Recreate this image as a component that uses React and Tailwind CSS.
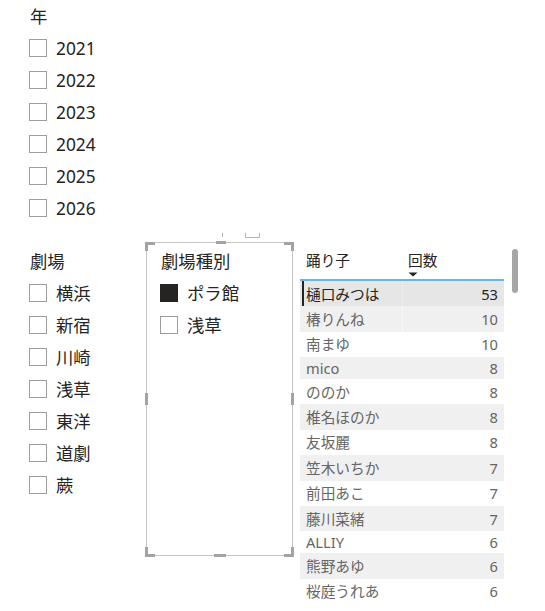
import React from "react";

const FONT = { fontFamily: '"Noto Sans", "Noto Sans CJK JP", sans-serif' };

function Box({ checked }) {
  return (
    <span
      className={
        checked
          ? "block w-[18px] h-[18px] shrink-0 bg-[#252423] border border-[#252423]"
          : "block w-[18px] h-[18px] shrink-0 bg-white border border-[#9d9d9d]"
      }
    />
  );
}

function Item({ label, checked }) {
  return (
    <div className="flex items-center h-[32px] gap-[9px]">
      <Box checked={checked} />
      <span className="text-[17.33px] leading-[24px] text-[#252423]">{label}</span>
    </div>
  );
}

const rows = [
  ["樋口みつは", 53],
  ["椿りんね", 10],
  ["南まゆ", 10],
  ["mico", 8],
  ["ののか", 8],
  ["椎名ほのか", 8],
  ["友坂麗", 8],
  ["笠木いちか", 7],
  ["前田あこ", 7],
  ["藤川菜緒", 7],
  ["ALLIY", 6],
  ["熊野あゆ", 6],
  ["桜庭うれあ", 6],
];

function Row({ name, n, i }) {
  const latin = /^[A-Za-z]+$/.test(name);
  const h = latin ? "h-[21.8px]" : "h-[25.4px]";
  let bg = "bg-white";
  if (i === 0) bg = "bg-[#e6e6e6]";
  else if (i % 2 === 1) bg = "bg-[#f0f0f0]";
  const color = i === 0 ? "text-[#252423]" : "text-[#666666]";
  return (
    <div className={`flex items-stretch ${h} ${bg} ${color} text-[14.67px] leading-[20px]`}>
      <div
        className={
          i === 0
            ? "w-[100px] ml-[2px] pl-[2px] border-l-2 border-[#252423] flex items-center whitespace-nowrap"
            : "w-[102px] pl-[6px] flex items-center whitespace-nowrap"
        }
      >
        {name}
      </div>
      <div
        className={
          i === 0
            ? "flex-1 flex items-center justify-end pr-[6px] border-l border-[#ededed]"
            : i === 1
            ? "flex-1 flex items-center justify-end pr-[6px] border-l border-[#f8f8f8]"
            : "flex-1 flex items-center justify-end pr-[6px]"
        }
      >
        {n}
      </div>
    </div>
  );
}

function SelectionChrome() {
  const c = "#a3a3a3";
  return (
    <svg
      className="absolute left-[-3px] top-[-13px] pointer-events-none"
      width="152"
      height="330"
      viewBox="0 0 152 330"
    >
      {/* header icon remnants */}
      <line x1="78.5" y1="3" x2="78.5" y2="7" stroke="#b5b5b5" strokeWidth="1" />
      <path d="M101.5 3 V7.5 H115.5 V3" fill="none" stroke="#b5b5b5" strokeWidth="1" />
      {/* corners */}
      <rect x="1" y="12" width="10" height="3" fill={c} />
      <rect x="1" y="12" width="3" height="9" fill={c} />
      <rect x="140" y="12" width="10" height="3" fill={c} />
      <rect x="147" y="12" width="3" height="9" fill={c} />
      <rect x="1" y="324" width="10" height="3" fill={c} />
      <rect x="1" y="317" width="3" height="10" fill={c} />
      <rect x="140" y="324" width="10" height="3" fill={c} />
      <rect x="147" y="317" width="3" height="10" fill={c} />
      {/* mid handles */}
      <rect x="72" y="11" width="10" height="3" fill={c} />
      <rect x="70" y="324" width="12" height="3" fill={c} />
      <rect x="1" y="163" width="3" height="12" fill={c} />
      <rect x="147" y="163" width="3" height="12" fill={c} />
    </svg>
  );
}

export default function App() {
  return (
    <div className="w-[545px] h-[611px] overflow-hidden bg-white" style={FONT}>
      {/* Year slicer */}
      <div className="h-[242px] pl-[29px]">
        <div className="h-[32px] flex items-center text-[17.33px] leading-[24px] text-[#252423] pl-[1px]">年</div>
        {["2021", "2022", "2023", "2024", "2025", "2026"].map((y) => (
          <Item key={y} label={y} />
        ))}
      </div>

      <div className="flex items-start">
        {/* 劇場 slicer */}
        <div className="w-[146px] pl-[29px] pt-[3px]">
          <div className="h-[32px] flex items-center text-[17.33px] leading-[24px] text-[#252423] pl-[1px]">劇場</div>
          {["横浜", "新宿", "川崎", "浅草", "東洋", "道劇", "蕨"].map((t) => (
            <Item key={t} label={t} />
          ))}
        </div>

        {/* 劇場種別 slicer (selected frame) */}
        <div className="relative w-[147px] h-[314px] border border-[#c6c6c6] pl-[13px] pt-[1px]">
          <div className="h-[33px] flex items-center text-[17.33px] leading-[24px] text-[#252423] pl-[1px]">劇場種別</div>
          <Item label="ポラ館" checked />
          <Item label="浅草" />
          <SelectionChrome />
        </div>

        {/* Table */}
        <div className="ml-[7px] w-[204px]">
          <div className="flex h-[37px] text-[14.67px] leading-[20px] text-[#252423]">
            <div className="w-[102px] pl-[6px] pt-[8px]">踊り子</div>
            <div className="pl-[6px] pt-[8px] flex flex-col">
              <span>回数</span>
              <svg className="mt-[2px]" width="10" height="5" viewBox="0 0 10 5">
                <path d="M0.5 0.5 H9.5 L5 4.5 Z" fill="#252423" />
              </svg>
            </div>
          </div>
          <div className="h-[2px] bg-[#69b3e7]" />
          {rows.map(([name, n], i) => (
            <Row key={name} name={name} n={n} i={i} />
          ))}
        </div>

        {/* scrollbar */}
        <div className="ml-[8px] mt-[7px] w-[6px] h-[44px] rounded-full bg-[#a6a6a6]" />
      </div>
    </div>
  );
}
